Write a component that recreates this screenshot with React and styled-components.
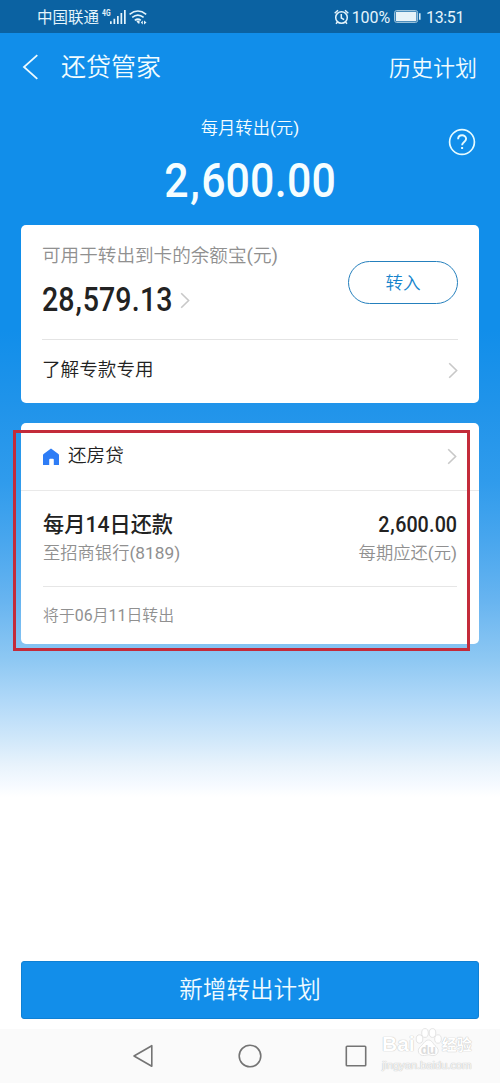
import React from "react";
import styled, { createGlobalStyle } from "styled-components";

const Global = createGlobalStyle`
  * { box-sizing: border-box; }
  body { margin: 0; background: #fff; }
  svg { display: block; flex: none; }
`;

const Screen = styled.div`
  position: relative;
  display: flex;
  flex-direction: column;
  width: 500px;
  height: 1083px;
  overflow: hidden;
  font-family: Roboto, "Noto Sans CJK SC", sans-serif;
  font-weight: 350;
  color: #222;
  background: linear-gradient(
    #118eea 0, #118eea 330px, #2194ea 410px, #2f9bec 480px, #48a6ee 540px,
    #67b4f0 600px, #8ec8f3 660px, #b0d8f8 700px, #cfe7fa 738px, #e8f3fc 765px,
    #f6faff 785px, #fff 797px
  );
`;

const Latin = styled.span`
  font-weight: 400;
`;

const StatusBar = styled.header`
  display: flex;
  align-items: center;
  justify-content: space-between;
  height: 33px;
  padding: 0 36px 0 37px;
  background: #0b62a2;
  color: #e4f4fc;
  font-size: 16px;
  font-weight: 400;
`;

const StatusGroup = styled.div`
  display: flex;
  align-items: center;
  height: 33px;
`;

const Carrier = styled.span`
  font-size: 15.5px;
  line-height: 33px;
  margin: 3px 2px 0 0;
`;

const Percent = styled.span`
  margin: 1px 4px 0 3px;
  letter-spacing: -0.1px;
`;

const Clock = styled.span`
  margin: 1px 0 0 4px;
  width: 38px;
  letter-spacing: -0.35px;
`;

const TitleBar = styled.nav`
  display: flex;
  align-items: center;
  height: 67px;
  padding: 0 23px 0 22px;
  color: #f2fcff;
`;

const Title = styled.h1`
  flex: 1;
  margin: 2px 0 0 22px;
  font-size: 25px;
  font-weight: inherit;
  line-height: 67px;
`;

const HistoryLink = styled.span`
  margin-top: 3px;
  font-size: 22px;
  line-height: 67px;
`;

const Summary = styled.section`
  display: grid;
  grid-template-columns: 1fr 300px 1fr;
  align-items: start;
  height: 125px;
  color: #f5fdff;
`;

const SummaryText = styled.div`
  grid-column: 2;
  display: flex;
  flex-direction: column;
  align-items: center;
`;

const Caption = styled.div`
  margin-top: 14px;
  font-size: 17.3px;
  line-height: 28px;
`;

const Help = styled.div`
  justify-self: end;
  margin: 28px 24px 0 0;
`;

const AmountText = styled.span`
  display: inline-block;
  font-size: ${(p) => p.$size}px;
  font-weight: 500;
  line-height: 1.2;
  white-space: nowrap;
  transform: scaleX(${(p) => p.$squeeze});
  transform-origin: ${(p) => p.$origin};
`;

const Mark = styled.span`
  padding: 0 ${(p) => p.$right}em 0 ${(p) => p.$left}em;
`;

function Amount({ value, size, squeeze = 0.9, origin = "left" }) {
  return (
    <AmountText $size={size} $squeeze={squeeze} $origin={origin}>
      {value.split(/([,.])/).map((part, i) =>
        part === "," ? <Mark key={i} $left={0.04} $right={0.03}>,</Mark>
          : part === "." ? <Mark key={i} $left={0.01} $right={0.01}>.</Mark>
          : part
      )}
    </AmountText>
  );
}

const Total = styled.div`
  margin-top: 10px;
  height: 58px;
  padding-left: 1px;
`;

const Card = styled.section`
  display: flex;
  flex-direction: column;
  height: ${(p) => p.$height}px;
  margin: 0 21px ${(p) => p.$gap}px;
  border-radius: 5px;
  background: #fff;
`;

const Balance = styled.div`
  display: flex;
  justify-content: space-between;
  height: 115px;
  margin: 0 21px;
  border-bottom: 1px solid #e4e4e4;
`;

const BalanceLabel = styled.div`
  margin-top: 17px;
  font-size: 18.6px;
  line-height: 28px;
  color: #909090;
`;

const BalanceValue = styled.div`
  display: flex;
  align-items: center;
  height: 40px;
  margin-top: 10px;
`;

const BalanceNumber = styled.div`
  width: 138px;
`;

const TransferButton = styled.button`
  width: 110px;
  height: 43px;
  margin-top: 36px;
  padding: 1px 0 0;
  border: 1.5px solid #2580bd;
  border-radius: 22px;
  background: #fff;
  color: #1684cc;
  font: 350 17.6px/40px Roboto, "Noto Sans CJK SC", sans-serif;
`;

const LinkRow = styled.div`
  display: flex;
  align-items: center;
  justify-content: space-between;
  height: ${(p) => p.$height}px;
  padding: 0 21px;
  font-size: 18.6px;
  line-height: 28px;
`;

const RowLabel = styled.span`
  flex: 1;
  margin: 0 0 2px ${(p) => p.$indent || 0}px;
`;

const PlanHeader = styled(LinkRow)`
  padding-right: 22px;
  border-bottom: 1px solid #e9e9e9;
`;

const PlanBody = styled.div`
  display: flex;
  justify-content: space-between;
  height: 96px;
  margin: 0 22px;
  padding-top: 19px;
  border-bottom: 1px solid #e6e6e6;
`;

const PlanColumn = styled.div`
  display: flex;
  flex-direction: column;
  align-items: ${(p) => p.$align};
`;

const PlanTitle = styled.div`
  height: 29px;
  font-size: 21.2px;
  font-weight: 500;
  line-height: 30px;
`;

const PlanNote = styled.div`
  font-size: 17.3px;
  line-height: 28px;
  color: #909090;
`;

const PlanFooter = styled.div`
  margin: 0 22px;
  font-size: 15.9px;
  line-height: 57px;
  color: #909090;
`;

const Highlight = styled.div`
  position: absolute;
  left: 13px;
  top: 430px;
  width: 457px;
  height: 221px;
  border: 3px solid #c32b3a;
`;

const PrimaryButton = styled.button`
  height: 58px;
  margin: auto 21px 10px;
  padding: 0;
  border: 1px solid #0f80d4;
  border-radius: 3px;
  background: #128eea;
  color: #f0fbff;
  font: 350 23.6px/54px Roboto, "Noto Sans CJK SC", sans-serif;
`;

const NavBar = styled.footer`
  display: flex;
  align-items: center;
  height: 54px;
  padding-left: 132px;
  background: #fafafa;
`;

const NavSlot = styled.span`
  width: 106px;
`;

const Watermark = styled.div`
  position: absolute;
  left: 382px;
  top: 1028px;
  width: 92px;
  color: #fff;
  font-family: "Liberation Sans", "Noto Sans CJK SC", sans-serif;
  text-shadow: 0 0 1px #bbb, 0 0 1px #ccc;
`;

const WatermarkBrand = styled.div`
  display: flex;
  align-items: flex-end;
  height: 29px;
  font-size: 21px;
  font-weight: 700;
  line-height: 26px;
`;

const Paw = styled.div`
  position: relative;
  width: 27px;
  height: 29px;
`;

const PawText = styled.span`
  position: absolute;
  left: 6px;
  top: 14px;
  font-size: 12.5px;
  line-height: 16px;
  color: #dcdcdc;
  text-shadow: none;
`;

const WatermarkCjk = styled.span`
  font-size: 15px;
  line-height: 24px;
`;

const WatermarkUrl = styled.div`
  margin-top: 1px;
  font-size: 11.5px;
  line-height: 14px;
  letter-spacing: -0.2px;
  color: #f8f8f8;
`;

const Chevron = ({ w = 10, h = 17 }) => (
  <svg width={w} height={h} viewBox="0 0 10 17" fill="none" stroke="#c8c8c8" strokeWidth="1.6">
    <path d="M1.2 1.2 8.6 8.5 1.2 15.8" />
  </svg>
);

const BackIcon = () => (
  <svg width="17" height="26" viewBox="0 0 17 26" fill="none" stroke="#ecfaff" strokeWidth="1.8">
    <path d="M15.3 1.2 2 13l13.3 11.8" />
  </svg>
);

const SignalIcon = () => (
  <svg width="52" height="33" viewBox="0 0 52 33" fill="#e4f4fc">
    <text x="1" y="15.6" fontSize="8.5" fontWeight="700" fontFamily="Roboto" textLength="8.5" lengthAdjust="spacingAndGlyphs">4G</text>
    <path d="M9 21.3h1.7V24H9zM12.5 18.7h1.7V24h-1.7zM16 16h1.7v8H16zM19.5 13h1.7v11h-1.7zM23 10h1.7v14H23z" />
    <g fill="none" stroke="#e4f4fc" strokeWidth="1.6">
      <path d="M28.6 14.3q8.3-6.6 16.6 0M31.2 17.4q5.7-4.6 11.4 0M33.8 20.3q3-2.4 6 0" />
    </g>
    <path d="M35 20.5h3.6v3h-1.5zM39.8 22.5l2-2v4zM45.500 22.500l-2.500-2v4z" />
  </svg>
);

const AlarmIcon = () => (
  <svg width="15" height="16" viewBox="0 0 15 16" fill="none" stroke="#e4f4fc" strokeWidth="1.5">
    <circle cx="7.5" cy="8.5" r="5.8" />
    <path d="M7.3 5v4l2.8 1.7M.7 4.2 4 1.2M14.3 4.2 11 1.2M3.5 13 2 14.8M11.5 13l1.5 1.8" />
  </svg>
);

const BatteryIcon = () => (
  <svg width="28" height="13" viewBox="0 0 28 13" fill="none">
    <rect x=".6" y=".6" width="23" height="11.8" rx="2" stroke="#a9cde2" strokeWidth="1" />
    <rect x="1.8" y="1.8" width="20.6" height="9.4" rx=".6" fill="#e8f3f8" />
    <path d="M25.8 3.2v6.6" stroke="#e4f4fc" strokeWidth="1.5" />
  </svg>
);

const HelpIcon = () => (
  <svg width="28" height="28" viewBox="0 0 28 28" fill="none" stroke="#e6fbff" strokeWidth="1.7">
    <circle cx="14" cy="14" r="12.4" />
    <path d="M10.1 11.2c0-5.2 8-5.1 8-.4 0 3.1-4 3.3-4 6.5" strokeWidth="1.9" />
    <path d="M13.1 19h2v2h-2z" fill="#e6fbff" stroke="none" />
  </svg>
);

const HomeIcon = () => (
  <svg width="18" height="18" viewBox="0 0 18 18" fill="#2e7df6">
    <path d="M9 .5 16.4 6q.6.5.6 1.2V17h-5.2v-5.2q0-1-1-1H8.2q-1 0-1 1V17H1V7.2Q1 6.5 1.6 6z" />
  </svg>
);

const NavIcon = ({ children }) => (
  <svg width="24" height="24" viewBox="0 0 24 24" fill="none" stroke="#747474" strokeWidth="1.6" strokeLinejoin="round">
    {children}
  </svg>
);

const PawIcon = () => (
  <svg width="27" height="29" viewBox="0 0 27 29" fill="#fff" stroke="#ddd" strokeWidth=".8">
    <ellipse cx="4.5" cy="11" rx="3.3" ry="4.2" />
    <ellipse cx="10" cy="5" rx="3.3" ry="4.4" />
    <ellipse cx="17.5" cy="5" rx="3.3" ry="4.4" />
    <ellipse cx="23" cy="11" rx="3.3" ry="4.2" />
    <path d="M13.5 12c3.5 0 4.5 4 7.5 6.5 4 3.5 2 8.5-2 9-3 .4-3.5-.7-5.5-.7s-3 1-6 .7c-4-.5-6-5.5-2-9 3-2.5 4.5-6.5 8-6.5z" />
  </svg>
);

export default function App() {
  return (
    <Screen>
      <Global />
      <StatusBar>
        <StatusGroup>
          <Carrier>中国联通</Carrier>
          <SignalIcon />
        </StatusGroup>
        <StatusGroup>
          <AlarmIcon />
          <Percent>100%</Percent>
          <BatteryIcon />
          <Clock>13:51</Clock>
        </StatusGroup>
      </StatusBar>
      <TitleBar>
        <BackIcon />
        <Title>还贷管家</Title>
        <HistoryLink>历史计划</HistoryLink>
      </TitleBar>
      <Summary>
        <SummaryText>
          <Caption>每月转出<Latin>(</Latin>元<Latin>)</Latin></Caption>
          <Total><Amount value="2,600.00" size={48} squeeze={0.893} origin="center" /></Total>
        </SummaryText>
        <Help><HelpIcon /></Help>
      </Summary>
      <Card $height={178} $gap={20}>
        <Balance>
          <div>
            <BalanceLabel>可用于转出到卡的余额宝<Latin>(</Latin>元<Latin>)</Latin></BalanceLabel>
            <BalanceValue>
              <BalanceNumber><Amount value="28,579.13" size={33} squeeze={0.865} /></BalanceNumber>
              <Chevron />
            </BalanceValue>
          </div>
          <TransferButton>转入</TransferButton>
        </Balance>
        <LinkRow $height={61}>
          <RowLabel>了解专款专用</RowLabel>
          <Chevron />
        </LinkRow>
      </Card>
      <Card $height={221} $gap={0}>
        <PlanHeader $height={68}>
          <HomeIcon />
          <RowLabel $indent={8}>还房贷</RowLabel>
          <Chevron />
        </PlanHeader>
        <PlanBody>
          <PlanColumn $align="flex-start">
            <PlanTitle>每月14日还款</PlanTitle>
            <PlanNote>至招商银行<Latin>(8189)</Latin></PlanNote>
          </PlanColumn>
          <PlanColumn $align="flex-end">
            <PlanTitle><Amount value="2,600.00" size={22.5} squeeze={0.875} origin="right" /></PlanTitle>
            <PlanNote>每期应还<Latin>(</Latin>元<Latin>)</Latin></PlanNote>
          </PlanColumn>
        </PlanBody>
        <PlanFooter>将于<Latin>06</Latin>月<Latin>11</Latin>日转出</PlanFooter>
      </Card>
      <Highlight />
      <PrimaryButton>新增转出计划</PrimaryButton>
      <NavBar>
        <NavSlot><NavIcon><path d="M19.8 1.7v20.6L2 12z" /></NavIcon></NavSlot>
        <NavSlot><NavIcon><circle cx="12" cy="12" r="10.8" /></NavIcon></NavSlot>
        <NavSlot><NavIcon><rect x="2.3" y="2.3" width="19.4" height="19.4" rx=".8" /></NavIcon></NavSlot>
      </NavBar>
      <Watermark>
        <WatermarkBrand>
          <span>Bai</span>
          <Paw><PawIcon /><PawText>du</PawText></Paw>
          <WatermarkCjk>经验</WatermarkCjk>
        </WatermarkBrand>
        <WatermarkUrl>jingyan.baidu.com</WatermarkUrl>
      </Watermark>
    </Screen>
  );
}
